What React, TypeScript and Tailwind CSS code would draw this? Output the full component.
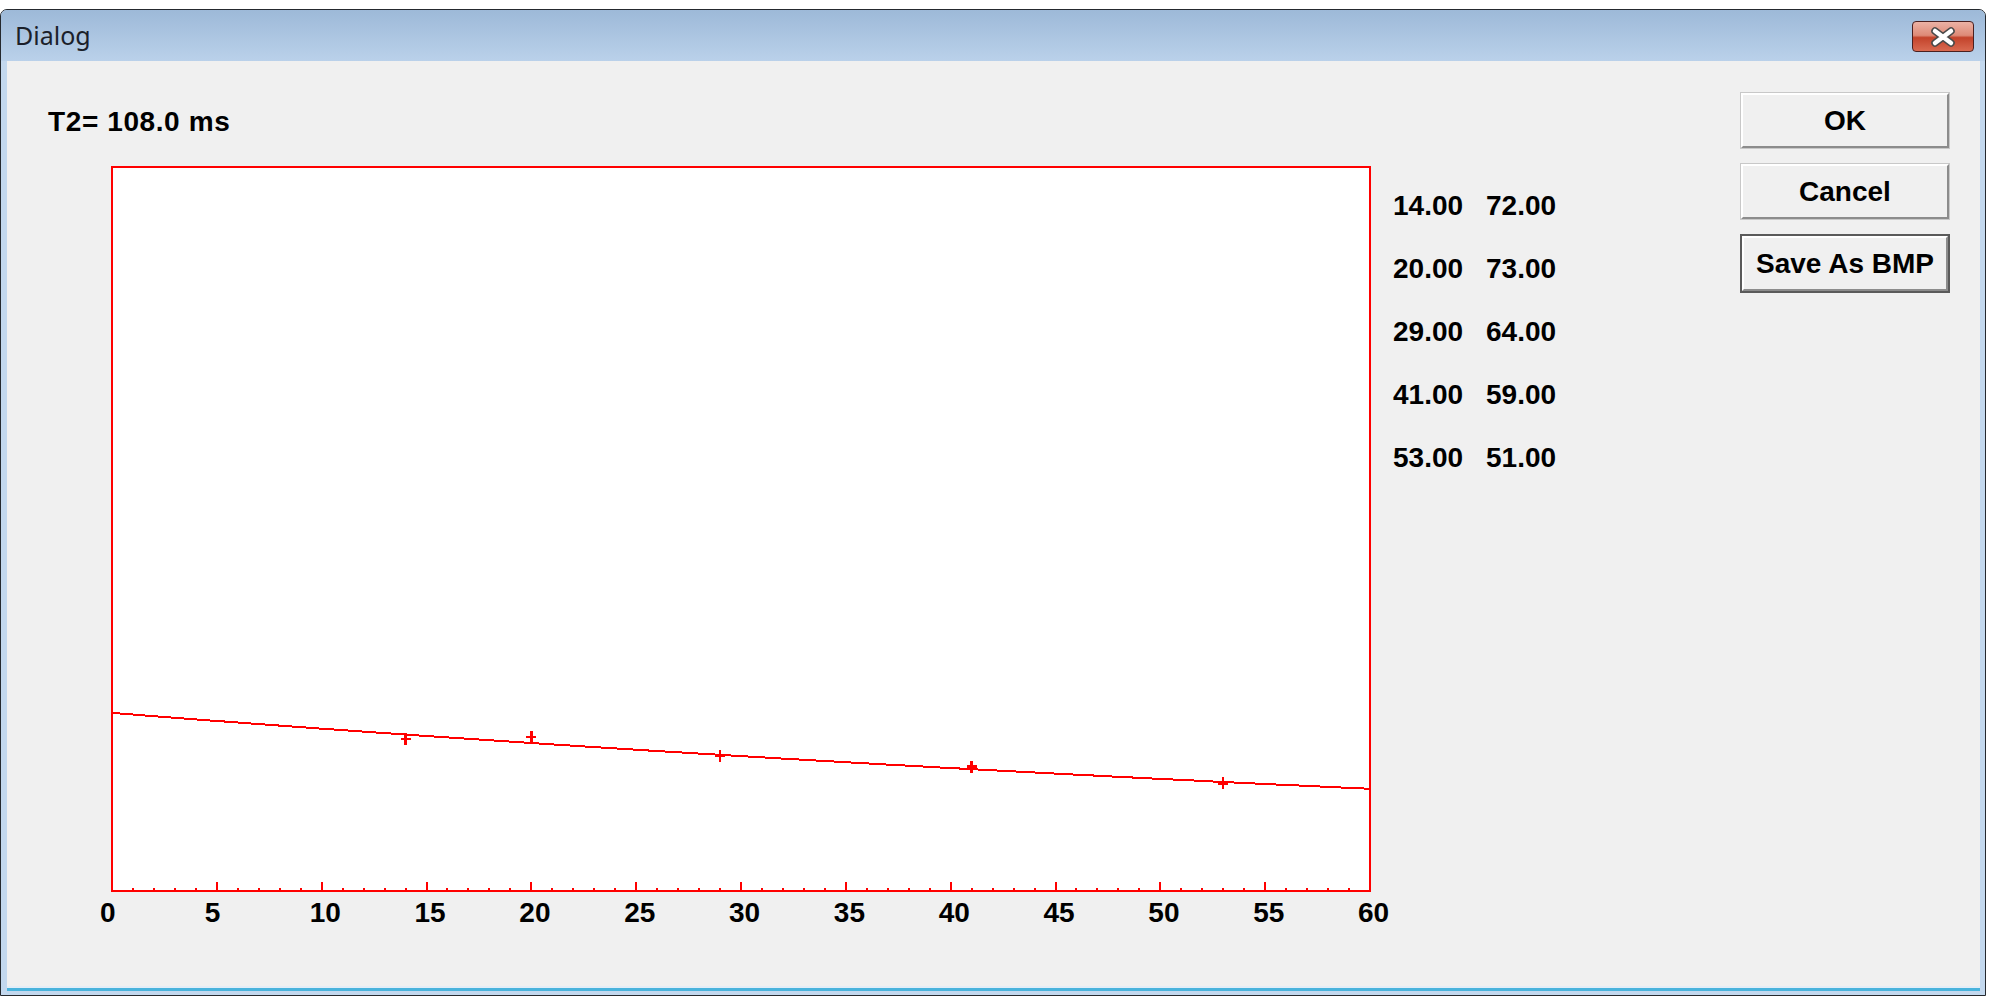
import React from "react";

const rows = [
  ["14.00", "72.00"],
  ["20.00", "73.00"],
  ["29.00", "64.00"],
  ["41.00", "59.00"],
  ["53.00", "51.00"],
];

const points = [
  [14, 72],
  [20, 73],
  [29, 64],
  [41, 59],
  [53, 51],
];

// plot box inside the svg
const L = 22;
const T = 7;
const W = 1258;
const H = 724;
const B = T + H;
const px = (t: number) => L + (t * W) / 60;
const py = (v: number) => B - v * 2.11;

function Chart() {
  const ticks = Array.from({ length: 61 }, (_, i) => i);
  const curve = Array.from({ length: 121 }, (_, i) => {
    const t = i / 2;
    return `${px(t).toFixed(1)},${(B - 178.1 * Math.exp(-t / 108)).toFixed(1)}`;
  }).join(" ");

  return (
    <svg width="1320" height="770" className="block">
      <rect x={L} y={T} width={W} height={H} fill="#fff" stroke="#ff0000" strokeWidth="2" shapeRendering="crispEdges" />
      {ticks.map((i) => (
        <line
          key={i}
          x1={px(i)}
          x2={px(i)}
          y1={B}
          y2={B - (i % 5 === 0 ? 9 : 3)}
          stroke="#ff0000"
          strokeWidth="2"
          shapeRendering="crispEdges"
        />
      ))}
      <polyline points={curve} fill="none" stroke="#ff0000" strokeWidth="2" shapeRendering="crispEdges" />
      {points.map(([t, v]) => (
        <g key={t} stroke="#ff0000" strokeWidth="2.5" shapeRendering="crispEdges">
          <line x1={px(t) - 5} x2={px(t) + 5} y1={py(v)} y2={py(v)} />
          <line x1={px(t)} x2={px(t)} y1={py(v) - 6} y2={py(v) + 6} />
        </g>
      ))}
      {ticks
        .filter((i) => i % 5 === 0)
        .map((i) => (
          <text
            key={i}
            x={px(i) - 12}
            y={762}
            fontSize="28"
            fontWeight="700"
            fontFamily="'Liberation Sans', Arial, sans-serif"
            fill="#000"
          >
            {i}
          </text>
        ))}
    </svg>
  );
}

function Btn({ label, def }: { label: string; def?: boolean }) {
  return (
    <div className={def ? "border-2 border-[#5a5a5a]" : "border border-[#c8c8c8]"}>
      <div className="flex items-center justify-center h-[55px] bg-[#f0f0f0] border-2 border-t-white border-l-white border-r-[#8c8c8c] border-b-[#8c8c8c] text-[28px] font-bold leading-none text-black">
        {label}
      </div>
    </div>
  );
}

export default function App() {
  return (
    <div className="w-[1989px] h-[999px] bg-white pt-[9px] font-['Liberation_Sans',Arial,sans-serif]">
      <div className="w-[1986px] h-[987px] rounded-t-[7px] border border-[#25292e] bg-[#c3d8ee] flex flex-col overflow-hidden">
        <div className="h-[51px] shrink-0 bg-gradient-to-b from-[#9db9d8] to-[#bad1ea] flex items-center justify-between pl-[14px] pr-[11px]">
          <span className="text-[25px] text-[#1b1f2a] font-['Noto_Sans',sans-serif] leading-none">Dialog</span>
          <div className="w-[62px] h-[31px] mt-[2px] rounded-[4px] border border-[#4a2020] bg-[linear-gradient(to_bottom,#ebb2a5_0%,#de8a77_46%,#c3432b_54%,#d96a51_100%)] flex items-center justify-center">
            <svg width="28" height="20" viewBox="0 0 28 20">
              <path d="M6 4 L22 16 M22 4 L6 16" stroke="#4a4a4a" strokeWidth="7.5" strokeLinecap="round" />
              <path d="M6 4 L22 16 M22 4 L6 16" stroke="#ffffff" strokeWidth="4.5" strokeLinecap="round" />
            </svg>
          </div>
        </div>
        <div className="flex-1 ml-[6px] mr-[5px] mb-[7px] bg-[#f0f0f0] flex border-b-2 border-[#e3edf7] shadow-[0_3px_0_#49b3dc]">
          <div className="w-[1386px] shrink-0">
            <div className="mt-[47px] pl-[41px] text-[28px] leading-[28px] font-bold tracking-[0.6px] text-black">T2= 108.0 ms</div>
            <div className="mt-[24px] ml-[83px]">
              <Chart />
            </div>
          </div>
          <div className="w-[347px] shrink-0 pt-[113px] text-[28px] font-bold text-black">
            {rows.map(([a, b]) => (
              <div key={a} className="flex leading-[63px]">
                <span className="w-[93px]">{a}</span>
                <span>{b}</span>
              </div>
            ))}
          </div>
          <div className="w-[210px] shrink-0 pt-[31px] flex flex-col gap-[14px]">
            <Btn label="OK" />
            <Btn label="Cancel" />
            <Btn label="Save As BMP" def />
          </div>
        </div>
      </div>
    </div>
  );
}
